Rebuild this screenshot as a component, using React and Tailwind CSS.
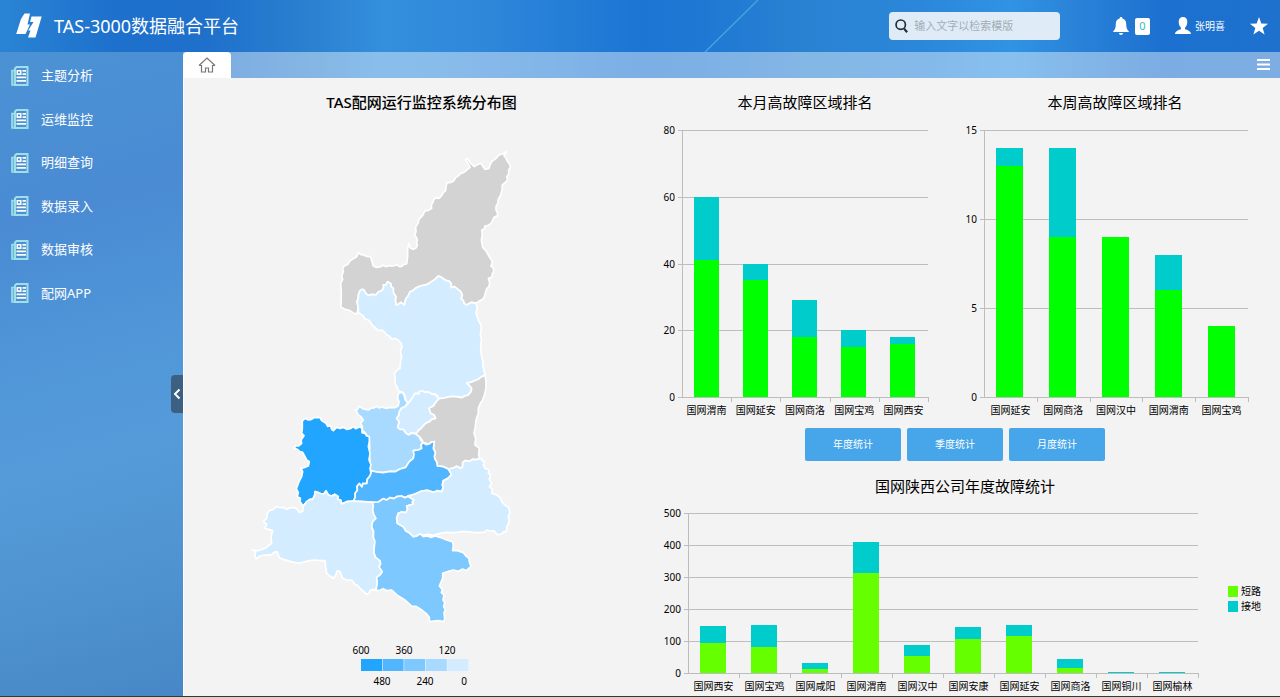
// src/App.jsx
import React, { useState } from 'react';

const menus = ['主题分析', '运维监控', '明细查询', '数据录入', '数据审核', '配网APP'];

const monthRank = [
  { name: '国网渭南', short: 41, total: 60 },
  { name: '国网延安', short: 35, total: 40 },
  { name: '国网商洛', short: 18, total: 29 },
  { name: '国网宝鸡', short: 15, total: 20 },
  { name: '国网西安', short: 16, total: 18 }
];

const weekRank = [
  { name: '国网延安', short: 13, total: 14 },
  { name: '国网商洛', short: 9, total: 14 },
  { name: '国网汉中', short: 9, total: 9 },
  { name: '国网渭南', short: 6, total: 8 },
  { name: '国网宝鸡', short: 4, total: 4 }
];

const yearStats = [
  { name: '国网西安', short: 94, total: 147 },
  { name: '国网宝鸡', short: 81, total: 149 },
  { name: '国网咸阳', short: 14, total: 31 },
  { name: '国网渭南', short: 312, total: 409 },
  { name: '国网汉中', short: 53, total: 89 },
  { name: '国网安康', short: 107, total: 143 },
  { name: '国网延安', short: 116, total: 149 },
  { name: '国网商洛', short: 17, total: 43 },
  { name: '国网铜川', short: 1, total: 4 },
  { name: '国网榆林', short: 1, total: 4 }
];

// Shaanxi prefectures
const regions = [
  {
    name: '榆林',
    fill: '#d3d3d3',
    points: '355,337 360,343 372,345 378,349 392,350 396,365 400,378 408,382 420,381 430,376 438,380 445,377 460,378 470,374 478,380 485,379 492,373 500,372 503,350 503,325 507,310 511,325 520,328 528,324 532,316 530,308 532,300 528,290 524,285 528,275 527,260 534,250 537,238 548,226 555,212 564,212 575,205 574,196 577,190 582,178 587,174 597,175 603,170 610,158 617,152 618,138 622,128 630,128 640,124 648,112 655,108 662,100 672,97 690,82 684,70 677,58 683,57 692,70 703,80 712,74 723,70 728,78 735,88 747,85 751,72 757,63 768,55 778,44 788,42 800,34 792,48 798,54 800,60 807,70 812,80 806,90 806,102 800,110 803,120 795,128 787,135 786,150 782,165 775,178 773,190 768,200 768,210 773,220 771,228 762,232 755,248 745,256 735,258 732,268 725,270 727,285 724,300 728,322 738,333 745,345 757,365 753,378 760,384 761,395 757,402 755,412 745,415 749,428 747,440 740,446 735,462 733,470 728,478 718,483 708,490 695,487 680,495 672,490 670,482 663,475 667,466 662,455 650,445 643,440 633,442 634,432 628,424 620,422 612,418 605,412 595,408 585,418 570,428 560,434 540,438 528,444 518,452 510,455 506,465 497,478 493,495 483,487 475,493 468,495 466,480 468,470 460,458 460,445 453,440 453,432 443,425 438,434 430,435 431,445 425,452 415,456 407,465 397,463 385,466 377,460 372,450 366,448 360,452 355,465 355,475 351,485 355,505 350,522 342,520 330,512 315,508 303,502 303,485 304,460 302,430 308,418 305,408 310,395 308,385 313,378 325,372 330,362 340,356 350,350'
  },
  {
    name: '延安',
    fill: '#d4ecff',
    points: '355,505 351,485 355,475 355,465 360,452 366,448 372,450 377,460 385,466 397,463 407,465 415,456 425,452 431,445 430,435 438,434 443,425 453,432 453,440 460,445 460,458 468,470 466,480 468,495 475,493 483,487 493,495 497,478 506,465 510,455 518,452 528,444 540,438 560,434 570,428 585,418 595,408 605,412 612,418 620,422 628,424 634,432 633,442 643,440 650,445 662,455 667,466 663,475 670,482 672,490 680,495 695,487 708,490 712,500 708,520 717,545 723,555 724,565 721,580 724,600 722,620 723,640 728,660 729,680 735,705 725,710 715,718 700,724 680,730 688,736 695,745 693,755 685,765 675,768 665,773 648,770 630,770 612,774 597,776 592,768 585,762 575,762 565,756 555,757 548,753 535,758 525,765 520,776 510,788 500,785 495,770 490,758 475,752 471,740 465,730 466,715 463,700 472,690 480,685 481,668 485,650 481,635 486,620 483,610 474,600 465,595 455,597 448,588 440,585 433,576 425,570 414,572 405,562 396,555 390,545 385,540 375,537 370,528 355,518'
  },
  {
    name: '咸阳',
    fill: '#a8daff',
    points: '345,810 353,808 358,798 368,806 385,810 395,804 402,804 410,799 418,804 425,801 437,805 450,802 465,803 475,797 477,785 473,775 474,765 478,758 488,757 493,768 496,780 503,788 495,800 484,805 478,815 477,825 470,835 478,845 473,862 490,868 497,878 505,884 514,880 525,880 533,884 538,890 542,900 548,908 543,915 545,925 535,930 520,932 522,944 520,955 508,965 497,982 480,987 465,995 450,994 430,998 410,996 393,992 390,985 391,965 387,945 389,925 388,900 384,890 375,878 367,870 367,860 362,850 370,840 363,830 355,825 350,815'
  },
  {
    name: '铜川',
    fill: '#d4ecff',
    points: '505,790 512,780 520,768 525,760 537,762 538,754 548,753 555,757 565,756 575,762 588,765 592,772 597,776 588,786 580,798 567,805 572,820 582,824 587,835 575,838 568,846 560,848 550,857 543,866 535,870 532,878 525,880 515,878 505,884 497,878 490,868 480,868 473,862 478,845 470,835 477,825 478,815 484,805 495,800'
  },
  {
    name: '渭南',
    fill: '#d3d3d3',
    points: '735,705 738,725 738,745 733,765 728,780 721,790 715,805 715,820 708,840 706,860 702,880 707,895 705,915 712,920 718,925 716,940 718,955 708,959 697,958 690,964 675,962 668,968 668,980 662,985 650,979 640,984 625,987 610,980 592,978 590,965 585,958 583,950 586,938 580,925 583,905 575,906 567,912 550,908 545,898 538,890 527,882 537,870 543,866 550,857 560,848 568,846 575,838 587,835 582,824 572,820 567,805 580,798 588,786 597,776 612,774 630,770 648,770 665,773 675,768 685,765 693,755 695,745 688,736 680,730 700,724 715,718 725,710'
  },
  {
    name: '西安',
    fill: '#51b6ff',
    points: '393,992 410,996 430,998 450,994 465,995 480,987 497,982 508,965 520,955 522,944 520,932 535,930 545,925 543,915 550,908 558,914 567,912 575,906 583,905 580,925 586,938 583,950 585,958 590,965 592,978 610,980 625,987 635,1003 625,1014 610,1022 607,1035 610,1042 605,1055 592,1052 580,1057 562,1051 545,1053 530,1060 520,1065 505,1067 495,1073 485,1068 470,1070 462,1076 450,1073 440,1080 430,1076 415,1086 400,1087 375,1085 340,1083 345,1072 345,1060 352,1050 350,1040 358,1030 366,1040 368,1030 380,1030 381,1018 388,1010'
  },
  {
    name: '宝鸡',
    fill: '#22a5ff',
    points: '187,843 195,835 205,840 215,838 222,833 240,833 245,842 258,850 263,859 272,857 275,868 280,872 290,862 300,865 310,862 320,868 330,866 340,860 347,866 360,860 366,866 366,878 375,880 380,888 388,890 388,905 385,920 390,940 387,960 393,975 390,985 393,1000 388,1010 381,1018 380,1030 368,1030 366,1040 358,1030 350,1040 352,1050 345,1060 345,1072 340,1083 320,1085 305,1092 302,1080 293,1078 295,1070 285,1063 275,1068 265,1065 258,1053 252,1061 245,1062 235,1058 225,1055 224,1066 218,1078 210,1078 200,1085 190,1098 180,1085 181,1075 172,1070 175,1057 169,1047 177,1025 185,1010 188,995 183,985 195,982 205,978 208,965 200,960 195,950 188,937 180,935 172,928 162,925 168,918 176,918 185,910 183,900 192,887 185,880 187,865'
  },
  {
    name: '汉中',
    fill: '#d4ecff',
    points: '190,1098 200,1085 210,1078 218,1078 224,1066 225,1055 235,1058 245,1062 252,1061 258,1053 265,1065 275,1068 285,1063 295,1070 293,1078 302,1080 305,1092 320,1085 340,1083 398,1087 400,1098 398,1110 402,1125 408,1135 398,1145 395,1160 401,1175 400,1190 405,1205 403,1220 402,1238 407,1252 420,1262 422,1272 417,1280 427,1295 420,1305 410,1312 412,1330 408,1350 398,1348 390,1352 388,1360 380,1363 368,1352 360,1345 352,1335 345,1333 335,1320 320,1321 308,1315 304,1305 300,1295 292,1292 287,1305 280,1315 270,1308 260,1300 257,1280 255,1262 240,1262 225,1260 208,1262 192,1266 175,1270 150,1264 130,1258 118,1253 112,1236 105,1235 95,1244 75,1245 60,1248 48,1257 44,1245 47,1235 37,1230 55,1232 75,1225 84,1218 95,1210 93,1190 98,1172 85,1168 75,1165 80,1152 70,1145 80,1135 82,1120 90,1110 98,1110 108,1100 120,1103 130,1102 140,1108 155,1102 170,1105 178,1118 188,1114'
  },
  {
    name: '安康',
    fill: '#7cc8ff',
    points: '398,1087 415,1086 430,1076 440,1080 450,1073 462,1076 470,1070 485,1068 495,1073 505,1069 522,1080 517,1086 520,1092 500,1098 503,1108 497,1118 485,1116 475,1120 470,1135 472,1150 490,1160 497,1172 508,1178 520,1190 530,1188 540,1181 550,1190 560,1188 575,1192 585,1188 600,1192 620,1200 637,1205 640,1215 638,1232 652,1232 670,1238 678,1248 687,1255 688,1265 693,1280 686,1285 680,1292 668,1287 655,1294 640,1290 628,1293 608,1300 608,1315 598,1338 607,1348 604,1358 612,1365 609,1380 614,1388 611,1400 616,1410 612,1418 614,1435 612,1445 595,1442 568,1445 568,1432 558,1420 545,1410 530,1400 515,1398 495,1380 475,1368 455,1350 440,1352 430,1346 415,1352 408,1350 412,1330 410,1312 420,1305 427,1295 417,1280 422,1272 420,1262 407,1252 402,1238 403,1220 405,1205 400,1190 401,1175 395,1160 398,1145 408,1135 402,1125 398,1110 400,1098'
  },
  {
    name: '商洛',
    fill: '#d4ecff',
    points: '635,1003 625,1014 610,1022 607,1035 610,1042 605,1055 592,1052 580,1057 562,1051 545,1053 530,1060 505,1069 522,1080 517,1086 520,1092 500,1098 503,1108 497,1118 485,1116 475,1120 470,1135 472,1150 490,1160 497,1172 508,1178 520,1190 530,1188 540,1181 550,1186 565,1183 580,1186 600,1180 620,1177 645,1178 670,1174 700,1177 720,1178 735,1176 742,1170 752,1174 762,1172 772,1184 785,1182 792,1175 800,1174 800,1162 808,1145 805,1130 810,1118 806,1102 797,1097 785,1085 782,1074 770,1065 755,1060 758,1048 748,1040 755,1030 748,1018 752,1005 745,1000 747,990 735,985 730,975 735,965 727,963 725,955 718,957 708,959 697,958 690,964 675,962 668,968 668,980 662,985 650,979 640,984 625,987'
  }
];

const legendColors = ['#22a5ff', '#51b6ff', '#7cc8ff', '#a8daff', '#d4ecff'];

function NewsIcon() {
  return (
    <svg width="18" height="20" viewBox="0 0 18 20" fill="none" aria-hidden="true">
      <path d="M1 4.500H4V19H1z" fill="#69b7de" stroke="#9fe0e8" strokeWidth="1.600" />
      <path d="M5.500 1H16.500V19H4V2.500z" fill="#4b90d2" stroke="#9fe0e8" strokeWidth="2" />
      <path d="M5.500 4h5v5h-5zM11.500 4H15v1.700h-3.500zM11.500 7.200H15V9h-3.500zM5.500 10.500H15v1.800H5.500zM5.500 14H15v1.800H5.500z" fill="#fff" />
      <path d="M7 5.500h2v1.700H7z" fill="#4b8dd0" />
    </svg>
  );
}

function StackedChart({ data, width, height, left, right, top, bottom, max, step, color, children }) {
  const band = (right - left) / data.length;
  const barWidth = Math.round(band * 0.51);
  const y = v => Math.round(bottom - ((bottom - top) * v) / max);
  const ticks = [];
  for (let v = 0; v <= max; v += step) ticks.push(v);

  return (
    <svg viewBox={`0 0 ${width} ${height}`} className="block w-full" role="img">
      {ticks.map(v => (
        <g key={v}>
          <path d={`M${left - 4} ${y(v)}.5H${right}`} stroke="#bdbdbd" />
          <text x={left - 7} y={y(v) + 4} textAnchor="end" className="text-[10px]">{v}</text>
        </g>
      ))}
      <path d={`M${left}.5 ${top}V${bottom}`} stroke="#bdbdbd" />
      {data.map((d, i) => {
        const x = Math.floor(left + band * (i + 0.5) - barWidth / 2);
        return (
          <g key={d.name}>
            <rect x={x} y={y(d.total)} width={barWidth} height={y(d.short) - y(d.total)} fill="#00cccc" />
            <rect x={x} y={y(d.short)} width={barWidth} height={bottom - y(d.short)} fill={color} />
            <path d={`M${Math.round(left + band * (i + 1))}.5 ${bottom}v5`} stroke="#bdbdbd" />
            <text x={left + band * (i + 0.5)} y={bottom + 17} textAnchor="middle" className="text-[10px]">{d.name}</text>
          </g>
        );
      })}
      {children}
    </svg>
  );
}

function RegionMap() {
  return (
    <svg viewBox="0 0 457 582" className="block w-full" role="img">
      <g transform="translate(47 26) scale(0.33333)" stroke="#fff" strokeWidth="5" strokeLinejoin="round">
        {regions.map(r => <polygon key={r.name} points={r.points} fill={r.fill} />)}
      </g>
      {legendColors.map((c, i) => (
        <rect key={c} x={168 + i * 21.6} y="545" width="21" height="12" fill={c} />
      ))}
      <g textAnchor="middle" className="text-[10px]">
        <text x="168" y="540">600</text>
        <text x="211" y="540">360</text>
        <text x="254" y="540">120</text>
        <text x="189" y="571">480</text>
        <text x="232" y="571">240</text>
        <text x="271" y="571">0</text>
      </g>
    </svg>
  );
}

export default function App() {
  const [collapsed, setCollapsed] = useState(false);
  const [period, setPeriod] = useState('年度统计');

  return (
    <div className="flex min-h-screen flex-col border-b border-[#174a2c] bg-[linear-gradient(90deg,#2a84d4_0%,#1d70cc_9%,#1e70cb_16%,#2b80d0_24%,#348fdd_30%,#2f87da_38%,#1c75d3_50%,#1f78d3_55%,#2a82d2_63%,#2b87da_72%,#3093e4_79%,#2a83d8_84%,#1c70cf_91%,#1e72ce_100%)] font-['Noto_Sans','Noto_Sans_CJK_SC',sans-serif] text-black">
      {/* Header */}
      <header className="relative flex h-[52px] items-center pr-3 pl-4 text-white">
        <svg className="absolute top-0 left-[55%]" width="60" height="52" aria-hidden="true">
          <path d="M1 52L54 0" stroke="#4fb4ea" strokeWidth="1.500" opacity="0.700" />
        </svg>
        <svg width="26" height="26" viewBox="0 0 26 26" fill="#fff" aria-hidden="true">
          <path d="M8.500 0.500H14L11.500 11.500H14L9.500 21H0.200L5 6z" />
          <path d="M15.500 3.500H25.700L19.500 24.500H12L14.500 17.500H12.200L17.500 9H14z" />
        </svg>
        <h1 className="ml-3 text-[18px] leading-6">TAS-3000数据融合平台</h1>

        <div className="ml-auto flex items-center gap-[25px]">
          <label className="mr-7 flex h-7 w-[171px] items-center rounded bg-[#dfecf8] pl-1.5">
            <svg width="15" height="16" viewBox="0 0 15 16" fill="none" stroke="#1f2d38" aria-hidden="true">
              <circle cx="6.500" cy="6.500" r="5.300" strokeWidth="1.900" />
              <path d="M10.300 11l3.400 4" strokeWidth="2.500" />
            </svg>
            <input
              type="text"
              aria-label="检索模版"
              placeholder="输入文字以检索模版"
              className="ml-1.5 w-full bg-transparent text-[11px] text-gray-700 outline-none placeholder:text-[#a3adb5]"
            />
          </label>
          <button className="flex items-center gap-1.5" aria-label="通知">
            <svg width="16" height="18" viewBox="0 0 16 18" fill="#fff" aria-hidden="true">
              <path d="M8 0c.9 0 1.400.6 1.400 1.500C12 2.200 13.200 4.300 13.200 7c0 4 .8 5.600 2.600 7.200v.8H.2v-.8C2 12.600 2.800 11 2.800 7c0-2.700 1.200-4.800 3.800-5.500C6.600.6 7.100 0 8 0zM6 16h4c0 1.200-.9 2-2 2s-2-.8-2-2z" />
            </svg>
            <span className="flex h-[17px] w-[15px] items-center justify-center rounded-xs bg-white text-[11px] text-[#35bcc4]">0</span>
          </button>
          <button className="flex items-center gap-1">
            <svg width="16" height="18" viewBox="0 0 16 18" fill="#fff" aria-hidden="true">
              <path d="M8 0c2.600 0 4.300 1.700 4.300 4.800 0 2.500-.9 4.600-2.200 5.700v1.700c1.900.7 5.900 1.800 5.900 4.800H0c0-3 4-4.100 5.900-4.800v-1.700C4.600 9.400 3.700 7.300 3.700 4.800 3.700 1.700 5.400 0 8 0z" />
            </svg>
            <span className="text-[10px]">张明喜</span>
          </button>
          <button aria-label="收藏">
            <svg width="18" height="18" viewBox="0 0 18 18" fill="#fff" aria-hidden="true">
              <path d="M9 0l2.300 6.400L18 6.700l-5.300 4.200 1.900 6.600L9 13.700l-5.600 3.800 1.900-6.600L0 6.700l6.700-.3z" />
            </svg>
          </button>
        </div>
      </header>

      <div className="flex flex-1">
        {/* Sidebar */}
        <aside className={`relative shrink-0 bg-[linear-gradient(165deg,#4b92d4_0%,#4a8bd3_25%,#5198d9_50%,#559bda_62%,#5095d1_78%,#4787c7_100%)] ${collapsed ? 'w-3' : 'w-[183px]'}`}>
          {!collapsed && (
            <nav className="grid h-[263px] auto-rows-fr pt-0.5">
              {menus.map(m => (
                <a key={m} href="#" className="flex items-center gap-3 pl-[11px] text-[13px] text-white">
                  <NewsIcon />
                  {m}
                </a>
              ))}
            </nav>
          )}
          <button
            aria-label="收起菜单"
            onClick={() => setCollapsed(!collapsed)}
            className="absolute top-[323px] right-0 flex h-[38px] w-3 items-center justify-center rounded-l bg-[#3c5f82]"
          >
            <svg width="8" height="12" viewBox="0 0 8 12" fill="none" stroke="#fff" strokeWidth="2" aria-hidden="true">
              <path d="M6.500 1.500L2 6l4.500 4.500" />
            </svg>
          </button>
        </aside>

        <main className="flex flex-1 flex-col">
          {/* Tabs */}
          <div className="flex h-[26px] items-center justify-between bg-white/42 pr-2.5">
            <button aria-label="首页" className="flex h-full w-12 items-center justify-center rounded-t bg-white">
              <svg width="18" height="16" viewBox="0 0 18 16" fill="none" stroke="#777" strokeWidth="1.200" aria-hidden="true">
                <path d="M1 8.500L9 1l8 7.500M1 8.500h2.500V15H7.500v-4h3v4h4V8.500H17" />
              </svg>
            </button>
            <button aria-label="菜单">
              <svg width="13" height="12" viewBox="0 0 13 12" fill="#fff" aria-hidden="true">
                <path d="M0 0h13v2H0zM0 4.500h13v2H0zM0 9h13v2H0z" />
              </svg>
            </button>
          </div>

          <div className="grid flex-1 grid-cols-[457fr_630fr] border-l border-white bg-[#f3f3f3] pt-3 pl-[9px]">
            <section>
              <h2 className="text-center text-[15px] leading-6 font-medium">TAS配网运行监控系统分布图</h2>
              <RegionMap />
            </section>

            <section>
              <div className="grid grid-cols-2 pr-2.5">
                <div>
                  <h2 className="text-center text-[15px] leading-6">本月高故障区域排名</h2>
                  <StackedChart data={monthRank} width={310} height={306} left={32} right={278} top={16} bottom={283} max={80} step={20} color="#00ff00" />
                </div>
                <div>
                  <h2 className="text-center text-[15px] leading-6">本周高故障区域排名</h2>
                  <StackedChart data={weekRank} width={310} height={306} left={24} right={288} top={16} bottom={283} max={15} step={5} color="#00ff00" />
                </div>
              </div>

              <div className="flex justify-center gap-1.5 pt-2 pr-5">
                {['年度统计', '季度统计', '月度统计'].map(p => (
                  <button
                    key={p}
                    aria-pressed={period === p}
                    onClick={() => setPeriod(p)}
                    className="h-[33px] w-24 rounded-xs bg-[#47a6e9] text-[10px] text-white"
                  >
                    {p}
                  </button>
                ))}
              </div>

              <h2 className="mt-[13px] text-center text-[15px] leading-6">国网陕西公司年度故障统计</h2>
              <StackedChart data={yearStats} width={630} height={198} left={38} right={548} top={15} bottom={175} max={500} step={100} color="#66ff00">
                <rect x="578" y="88" width="10" height="11" fill="#66ff00" />
                <rect x="578" y="103" width="10" height="11" fill="#00cccc" />
                <text x="591" y="97" className="text-[10px]">短路</text>
                <text x="591" y="112" className="text-[10px]">接地</text>
              </StackedChart>
            </section>
          </div>
        </main>
      </div>
    </div>
  );
}
